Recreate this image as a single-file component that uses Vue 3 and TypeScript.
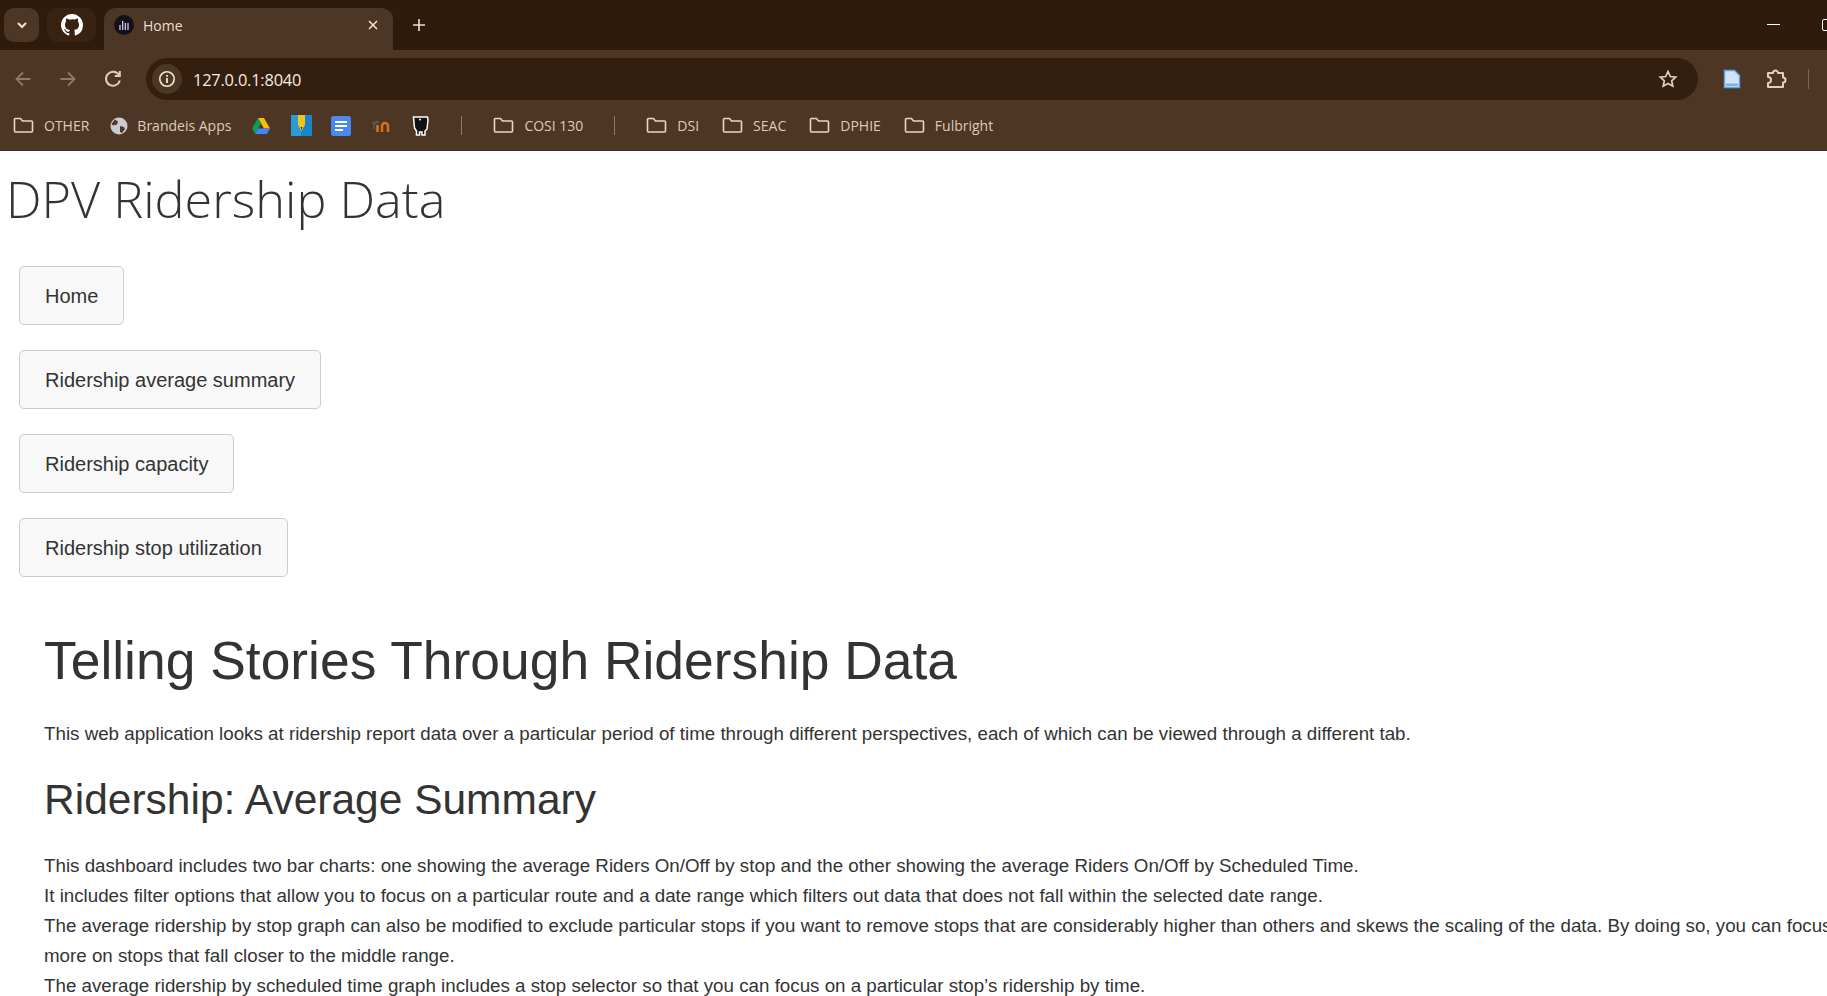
<script setup lang="ts">
interface Bookmark {
  label: string
  kind: 'folder' | 'globe'
}

const leftFolder: Bookmark[] = [
  { label: 'OTHER', kind: 'folder' },
  { label: 'Brandeis Apps', kind: 'globe' },
]
const rightFolders = ['DSI', 'SEAC', 'DPHIE', 'Fulbright']
const navItems = ['Home', 'Ridership average summary', 'Ridership capacity', 'Ridership stop utilization']
</script>

<template>
  <div class="page">
    <header class="chrome">
      <div class="tabstrip">
        <div class="tab-search">
          <svg width="14" height="14" viewBox="0 0 14 14"><path d="M3 5l4 4 4-4" fill="none" stroke="#f3e6d8" stroke-width="2" /></svg>
        </div>
        <div class="pinned">
          <svg width="22" height="22" viewBox="0 0 16 16"><path fill="#fff" d="M8 0C3.58 0 0 3.58 0 8c0 3.54 2.29 6.53 5.47 7.59.4.07.55-.17.55-.38v-1.34c-2.23.48-2.7-1.07-2.7-1.07-.36-.92-.89-1.17-.89-1.17-.73-.5.05-.49.05-.49.8.06 1.23.83 1.23.83.71 1.22 1.87.87 2.33.66.07-.52.28-.87.51-1.07-1.78-.2-3.64-.89-3.64-3.95 0-.87.31-1.59.82-2.15-.08-.2-.36-1.02.08-2.12 0 0 .67-.21 2.2.82A7.6 7.6 0 0 1 8 3.87c.68 0 1.36.09 2 .27 1.53-1.04 2.2-.82 2.2-.82.44 1.1.16 1.92.08 2.12.51.56.82 1.27.82 2.15 0 3.07-1.87 3.75-3.65 3.95.29.25.54.73.54 1.48v2.19c0 .21.15.46.55.38A8 8 0 0 0 16 8c0-4.42-3.58-8-8-8z" /></svg>
        </div>
        <div class="tab">
          <span class="favicon">
            <svg width="12" height="12" viewBox="0 0 12 12"><path d="M2 6v5M4.700 2v9M7.300 4v7M10 4v7" stroke="#e6d6f0" stroke-width="1.200" /></svg>
          </span>
          <span class="tab-title">Home</span>
          <svg class="tab-close" width="12" height="12" viewBox="0 0 12 12"><path d="M2 2l8 8M10 2l-8 8" stroke="#f3e6d8" stroke-width="1.500" /></svg>
        </div>
        <svg class="new-tab" width="14" height="14" viewBox="0 0 14 14"><path d="M7 1v12M1 7h12" stroke="#f0dfcd" stroke-width="1.600" /></svg>
        <div class="spacer"></div>
        <div class="minimize"></div>
        <div class="restore"></div>
      </div>

      <div class="toolbar">
        <svg class="tool" width="18" height="18" viewBox="0 0 18 18"><path d="M16.500 9H2.500M9 2.500L2.500 9 9 15.500" fill="none" stroke="#8f7a68" stroke-width="1.800" /></svg>
        <svg class="tool" width="18" height="18" viewBox="0 0 18 18"><path d="M1.500 9h14M9 2.500L15.500 9 9 15.500" fill="none" stroke="#8f7a68" stroke-width="1.800" /></svg>
        <svg class="tool" width="18" height="18" viewBox="0 0 18 18"><path d="M15.800 10.500a7 7 0 1 1-1-5.700M15.800 1v5h-5" fill="none" stroke="#e6cdb6" stroke-width="2" /></svg>
        <div class="omnibox">
          <span class="site-info">
            <svg width="18" height="18" viewBox="0 0 18 18"><circle cx="9" cy="9" r="7.200" fill="none" stroke="#f3e6d8" stroke-width="1.600" /><path d="M9 8v5M9 5v1.800" stroke="#f3e6d8" stroke-width="1.800" /></svg>
          </span>
          <span class="url">127.0.0.1:8040</span>
          <div class="spacer"></div>
          <svg width="20" height="20" viewBox="0 0 20 20"><path d="M10 2.500l2.300 5 5.400.6-4 3.700 1.100 5.400-4.800-2.700-4.800 2.700 1.100-5.400-4-3.700 5.400-.6z" fill="none" stroke="#e0d0c0" stroke-width="1.700" /></svg>
        </div>
        <svg class="ext-doc" width="18" height="20" viewBox="0 0 18 20"><path d="M1.500 1.500h10l5 5v12h-15z" fill="#d6e2fa" stroke="#5aa6ea" stroke-width="1.400" /><path d="M3 14.500h12v2.500H3z" fill="#78b4e8" /></svg>
        <svg class="ext-puzzle" width="22" height="22" viewBox="0 0 22 22"><path d="M3 5h5a2.500 2.500 0 0 1 5 0h5v4.500a2.500 2.500 0 0 1 0 5V19H3v-4a3 3 0 0 0 0-6z" fill="none" stroke="#e6cdb6" stroke-width="2" stroke-linejoin="round" /></svg>
        <div class="tool-sep"></div>
      </div>

      <div class="bookmarks">
        <div v-for="b in leftFolder" :key="b.label" class="bm" :class="b.kind">
          <svg v-if="b.kind === 'folder'" width="21" height="17" viewBox="0 0 21 17"><path d="M1.500 2.500a1 1 0 0 1 1-1h5l2 2.500h9a1 1 0 0 1 1 1v9a1 1 0 0 1-1 1h-16a1 1 0 0 1-1-1z" fill="none" stroke="#e6d6c6" stroke-width="1.600" /></svg>
          <svg v-else width="18" height="18" viewBox="0 0 18 18"><circle cx="9" cy="9" r="8.500" fill="#c8ccd0" /><path d="M5 2.500l3 2-1 3-4 1-1.500-1.500zM10 9l4 1 1 2-3 4-2-1z" fill="#4f3625" /></svg>
          <span>{{ b.label }}</span>
        </div>
        <svg class="icon-drive" width="18" height="16" viewBox="0 0 18 16"><path d="M6 0h6l6 10.500h-6z" fill="#fbbc04" /><path d="M6 0L0 10.500l3 5.500 6-10.500z" fill="#0f9d58" /><path d="M3 16l3-5.500h12L15 16z" fill="#4285f4" /></svg>
        <svg class="icon-pencil" width="21" height="21" viewBox="0 0 21 21"><rect width="21" height="21" fill="#1a86c8" /><path d="M0 0h10v21H0z" fill="#2a9bd8" /><path d="M7 0h7v10l-3.500 6L7 10z" fill="#f5c518" /><path d="M9.500 12h2l-1 3z" fill="#333" /></svg>
        <svg class="icon-docs" width="20" height="20" viewBox="0 0 20 20"><rect width="20" height="20" rx="2.500" fill="#4a8af0" /><path d="M4 5h12v2H4zM4 9h12v2H4zM4 13h8v2H4z" fill="#fff" /></svg>
        <svg class="icon-moodle" width="20" height="14" viewBox="0 0 20 14"><path d="M6.500 13V6M11 13V7a3 3 0 0 1 6 0v6" fill="none" stroke="#cf7418" stroke-width="2.600" /><path d="M0 4l6-2 3 1-6 2z" fill="#5e5e5e" /><path d="M3 5v5" stroke="#5e5e5e" stroke-width="1.500" /></svg>
        <svg class="icon-elephant" width="17" height="20" viewBox="0 0 17 20"><path d="M1.500 1h14l.5 3-1 9-2 2v4h-3v-3H7.500v3h-3v-4L2.500 12z" fill="#111" stroke="#fff" stroke-width="1.500" /><circle cx="8" cy="3.500" r="1" fill="#fff" /></svg>
        <div class="bm-sep first"></div>
        <div class="bm folder">
          <svg width="21" height="17" viewBox="0 0 21 17"><path d="M1.500 2.500a1 1 0 0 1 1-1h5l2 2.500h9a1 1 0 0 1 1 1v9a1 1 0 0 1-1 1h-16a1 1 0 0 1-1-1z" fill="none" stroke="#e6d6c6" stroke-width="1.600" /></svg>
          <span>COSI 130</span>
        </div>
        <div class="bm-sep second"></div>
        <div v-for="f in rightFolders" :key="f" class="bm folder wide">
          <svg width="21" height="17" viewBox="0 0 21 17"><path d="M1.500 2.500a1 1 0 0 1 1-1h5l2 2.500h9a1 1 0 0 1 1 1v9a1 1 0 0 1-1 1h-16a1 1 0 0 1-1-1z" fill="none" stroke="#e6d6c6" stroke-width="1.600" /></svg>
          <span>{{ f }}</span>
        </div>
      </div>
    </header>

    <main class="app">
      <h2 class="title">DPV Ridership Data</h2>
      <nav class="nav">
        <button v-for="item in navItems" :key="item" class="nav-btn" type="button">{{ item }}</button>
      </nav>
      <section class="content">
        <h1>Telling Stories Through Ridership Data</h1>
        <p>This web application looks at ridership report data over a particular period of time through different perspectives, each of which can be viewed through a different tab.</p>
        <h2 class="sub">Ridership: Average Summary</h2>
        <p>
          This dashboard includes two bar charts: one showing the average Riders On/Off by stop and the other showing the average Riders On/Off by Scheduled Time.<br />
          It includes filter options that allow you to focus on a particular route and a date range which filters out data that does not fall within the selected date range.<br />
          The average ridership by stop graph can also be modified to exclude particular stops if you want to remove stops that are considerably higher than others and skews the scaling of the data. By doing so, you can focus<br />
          more on stops that fall closer to the middle range.<br />
          The average ridership by scheduled time graph includes a stop selector so that you can focus on a particular stop’s ridership by time.
        </p>
      </section>
    </main>
  </div>
</template>

<style scoped>
.page {
  width: 1827px;
  height: 996px;
  overflow: hidden;
  background: #fff;
  display: flex;
  flex-direction: column;
}

/* browser frame */
.chrome {
  flex: none;
  font-family: "Open Sans", "Noto Sans", sans-serif;
  background: #4e3625;
  border-bottom: 1px solid #3d2a1c;
}

.tabstrip {
  height: 50px;
  background: #2f1b0c;
  display: flex;
  align-items: flex-end;
  overflow: hidden;
}

.tab-search {
  width: 35px;
  height: 34px;
  margin: 0 0 8px 4px;
  border-radius: 10px;
  background: #4e3625;
  display: flex;
  align-items: center;
  justify-content: center;
}

.pinned {
  width: 49px;
  height: 34px;
  margin: 0 0 8px 8px;
  border-radius: 10px;
  background: #3a2210;
  display: flex;
  align-items: center;
  justify-content: center;
}

.tab {
  width: 289px;
  height: 42px;
  margin-left: 8px;
  padding: 0 14px 8px 10px;
  box-sizing: border-box;
  border-radius: 12px 12px 0 0;
  background: #4e3625;
  display: flex;
  align-items: center;
  gap: 9px;
}

.favicon {
  width: 20px;
  height: 20px;
  border-radius: 50%;
  background: #12101c;
  display: flex;
  align-items: center;
  justify-content: center;
}

.tab-title {
  flex: 1;
  color: #ecdfd2;
  font-size: 14px;
}

.new-tab {
  margin: 0 0 18px 19px;
}

.spacer {
  flex: 1;
}

.minimize {
  width: 13px;
  height: 1px;
  margin: 0 42px 25px 0;
  background: #fff;
}

.restore {
  width: 13px;
  height: 10px;
  margin: 0 -10px 19px 0;
  border: 1px solid #fff;
  border-radius: 2px;
  flex: none;
}

.toolbar {
  height: 58px;
  display: flex;
  align-items: center;
  padding-left: 14px;
}

.tool {
  margin-right: 27px;
  flex: none;
}

.toolbar .tool:nth-child(3) {
  margin-right: 24px;
}

.omnibox {
  width: 1552px;
  height: 42px;
  padding: 0 20px 0 6px;
  box-sizing: border-box;
  border-radius: 21px;
  background: #341f0f;
  display: flex;
  align-items: center;
}

.site-info {
  width: 30px;
  height: 30px;
  border-radius: 50%;
  background: #4e3625;
  display: flex;
  align-items: center;
  justify-content: center;
}

.url {
  margin-left: 11px;
  color: #f4ebe2;
  font-size: 16.400px;
  letter-spacing: -0.2px;
}

.ext-doc {
  margin-left: 25px;
}

.ext-puzzle {
  margin-left: 24px;
}

.tool-sep {
  width: 1px;
  height: 20px;
  margin-left: 21px;
  background: #7a6554;
}

.bookmarks {
  height: 35px;
  padding-bottom: 7px;
  display: flex;
  align-items: center;
  padding-left: 13px;
  color: #dccbbb;
  font-size: 14px;
}

.bm {
  display: flex;
  align-items: center;
  gap: 10px;
  margin-right: 21px;
}

.bm.globe {
  gap: 9px;
  margin-right: 21px;
}

.bm.wide {
  margin-right: 23px;
}

.icon-pencil { margin-left: 21px; }
.icon-docs { margin-left: 19px; }
.icon-moodle { margin-left: 20px; }
.icon-elephant { margin-left: 21px; }

.bm-sep {
  width: 1px;
  height: 19px;
  background: #8f7a68;
}

.bm-sep.first { margin: 0 31px 0 32px; }
.bm-sep.second { margin: 0 31px 0 10px; }

/* page */
.app {
  flex: 1;
  min-height: 0;
  color: #333;
  font-family: "Liberation Sans", Arial, sans-serif;
  font-size: 18.750px;
  overflow: hidden;
}

.title {
  margin: 0;
  padding: 14px 0 0 6px;
  font-family: "Open Sans", "Noto Sans", sans-serif;
  font-weight: 300;
  font-size: 50.400px;
  line-height: 68px;
  white-space: nowrap;
}

.nav {
  margin-top: 33px;
  padding-left: 19px;
  display: flex;
  flex-direction: column;
  align-items: flex-start;
  gap: 25px;
}

.nav-btn {
  height: 59px;
  padding: 2px 25px 0;
  color: #333;
  font-family: inherit;
  font-size: 20px;
  background: #f8f8f8;
  border: 1px solid #ccc;
  border-radius: 5px;
}

.content {
  margin-top: 53px;
  padding-left: 44px;
  white-space: nowrap;
}

h1 {
  margin: 0 0 27px;
  font-weight: 500;
  font-size: 53.400px;
  line-height: 62px;
}

.sub {
  margin: 26px 0 26px;
  font-weight: 500;
  font-size: 42.500px;
  line-height: 50px;
}

p {
  margin: 0;
  line-height: 30px;
}
</style>

<style>
html,
body {
  margin: 0;
  overflow: hidden;
}
</style>
